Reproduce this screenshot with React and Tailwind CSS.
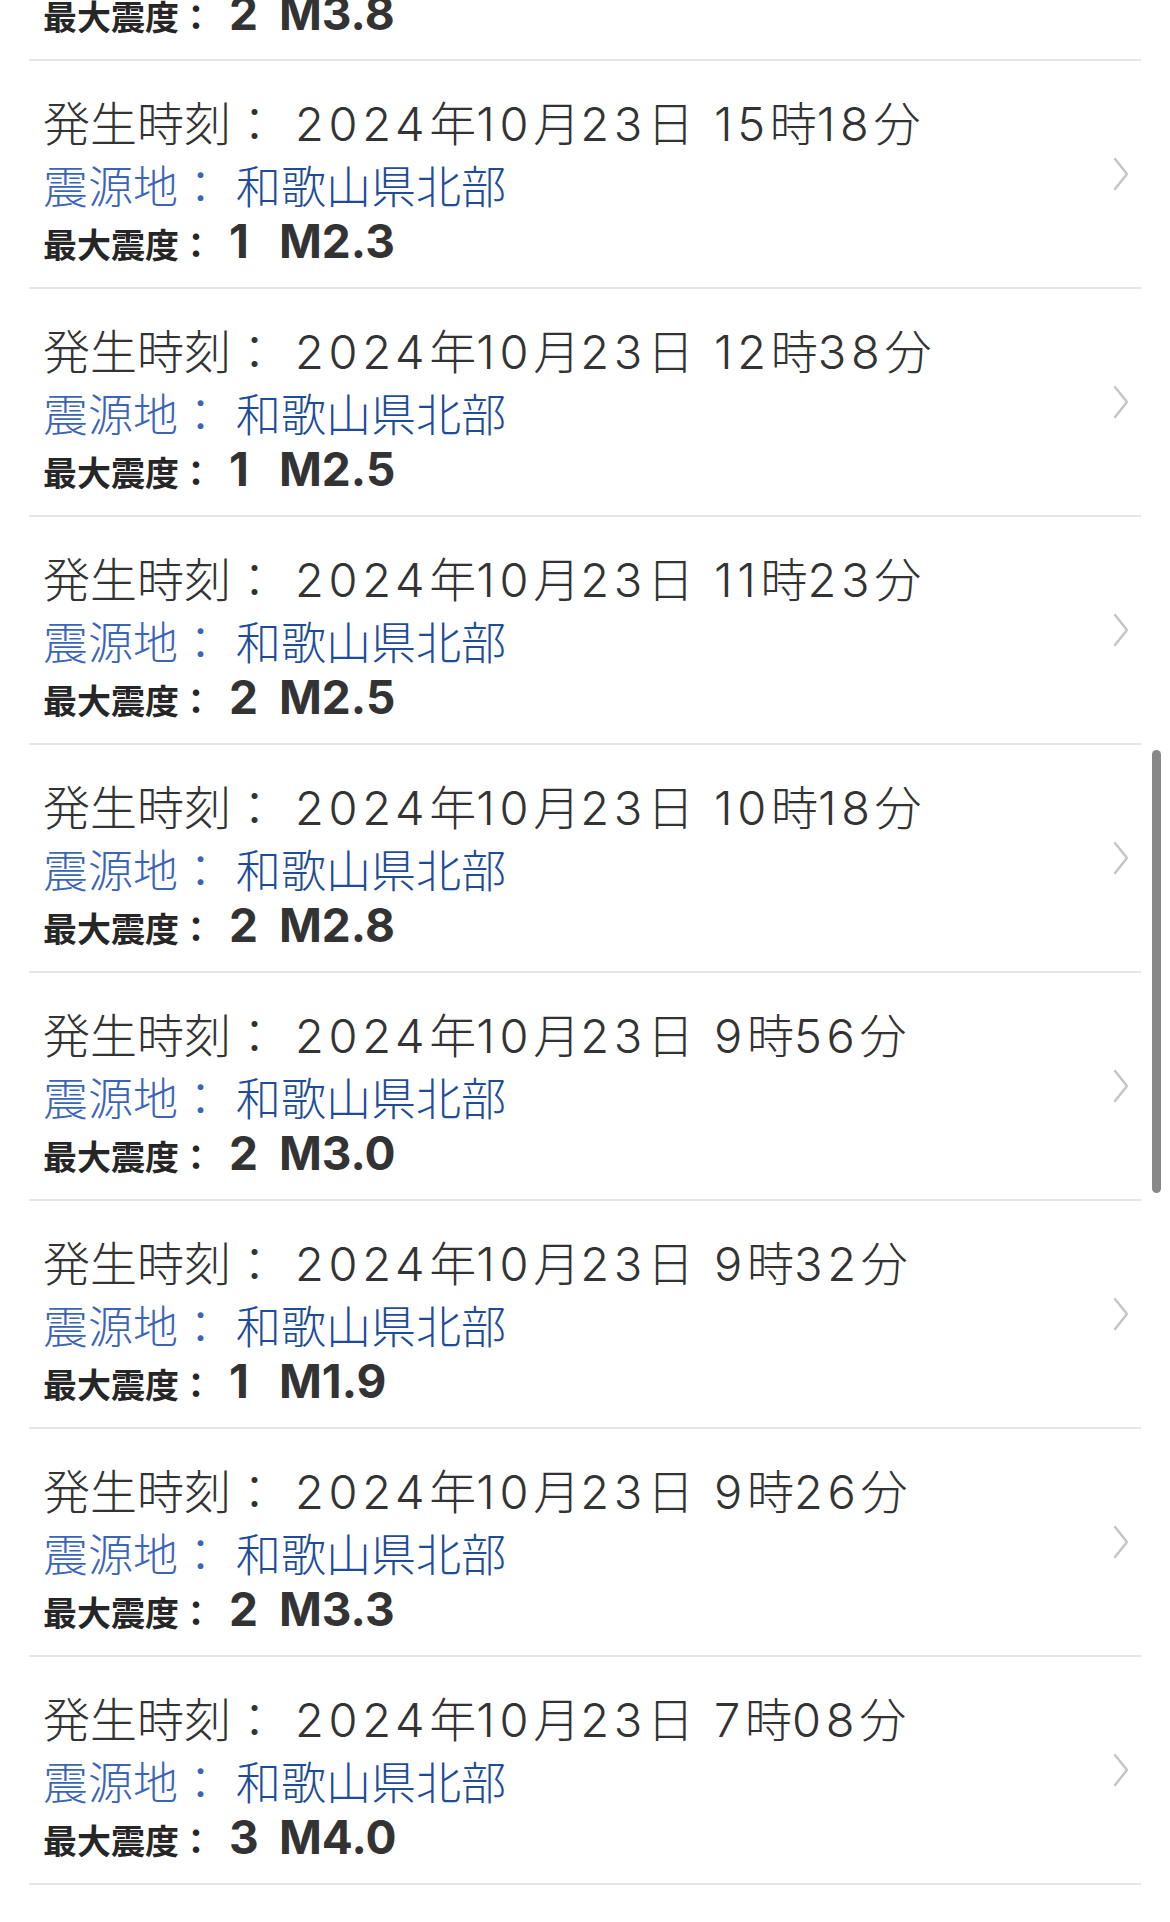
import React from "react";

const rows = [
  { time: "16時07分", shindo: "2", mag: "M3.8" },
  { time: "15時18分", shindo: "1", mag: "M2.3" },
  { time: "12時38分", shindo: "1", mag: "M2.5" },
  { time: "11時23分", shindo: "2", mag: "M2.5" },
  { time: "10時18分", shindo: "2", mag: "M2.8" },
  { time: "9時56分", shindo: "2", mag: "M3.0" },
  { time: "9時32分", shindo: "1", mag: "M1.9" },
  { time: "9時26分", shindo: "2", mag: "M3.3" },
  { time: "7時08分", shindo: "3", mag: "M4.0" },
];

function Digits({ text }) {
  const parts = text.split(/(\d+)/);
  return (
    <>
      {parts.map((p, i) =>
        /^\d+$/.test(p) ? (
          <span key={i} className="tracking-[0.1em]">
            {p}
          </span>
        ) : (
          <span key={i}>{p}</span>
        )
      )}
    </>
  );
}

function Chevron() {
  return (
    <svg width="18" height="34" viewBox="0 0 18 34" className="shrink-0 mr-[11px]">
      <polyline
        points="3,2 15,17 3,32"
        fill="none"
        stroke="#c4c4c4"
        strokeWidth="2.4"
        strokeLinecap="round"
        strokeLinejoin="round"
      />
    </svg>
  );
}

function Row({ time, shindo, mag }) {
  return (
    <div className="flex items-center h-[228px] border-b-2 border-[#e6e6e6]">
      <div className="flex-1 self-start pt-[31px] pl-[14px] flex flex-col whitespace-nowrap">
        <div className="h-[64px] leading-[64px] text-[47px] font-light text-[#333333]">
          <span>発生時刻：</span>
          <span className="pl-[17px]">
            <Digits text="2024年10月23日" />
          </span>
          <span className="pl-[20px]">
            <Digits text={time} />
          </span>
        </div>
        <div className="h-[64px] leading-[64px] text-[45px] font-light">
          <span className="text-[#3a64ba]">震源地：</span>
          <span className="pl-[13px] text-[#1d4c9b]">和歌山県北部</span>
        </div>
        <div className="h-[44px] leading-[44px] -mt-[1px] flex items-baseline">
          <span className="text-[34px] font-bold text-[#262626]">最大震度：</span>
          <span className="pl-[16px] text-[46px] font-bold text-[#333333]">
            <span className="inline-block w-[50px]">{shindo}</span>
            <span>{mag}</span>
          </span>
        </div>
      </div>
      <Chevron />
    </div>
  );
}

export default function App() {
  return (
    <div className="relative w-[1170px] h-[1922px] overflow-hidden bg-white font-['Inter','Noto_Sans_CJK_JP',sans-serif]">
      <div className="ml-[29px] w-[1112px] -mt-[167px]">
        {rows.map((r, i) => (
          <Row key={i} {...r} />
        ))}
      </div>
      <div className="absolute left-[1152px] top-[750px] w-[9px] h-[443px] rounded-full bg-[#888888]" />
    </div>
  );
}
